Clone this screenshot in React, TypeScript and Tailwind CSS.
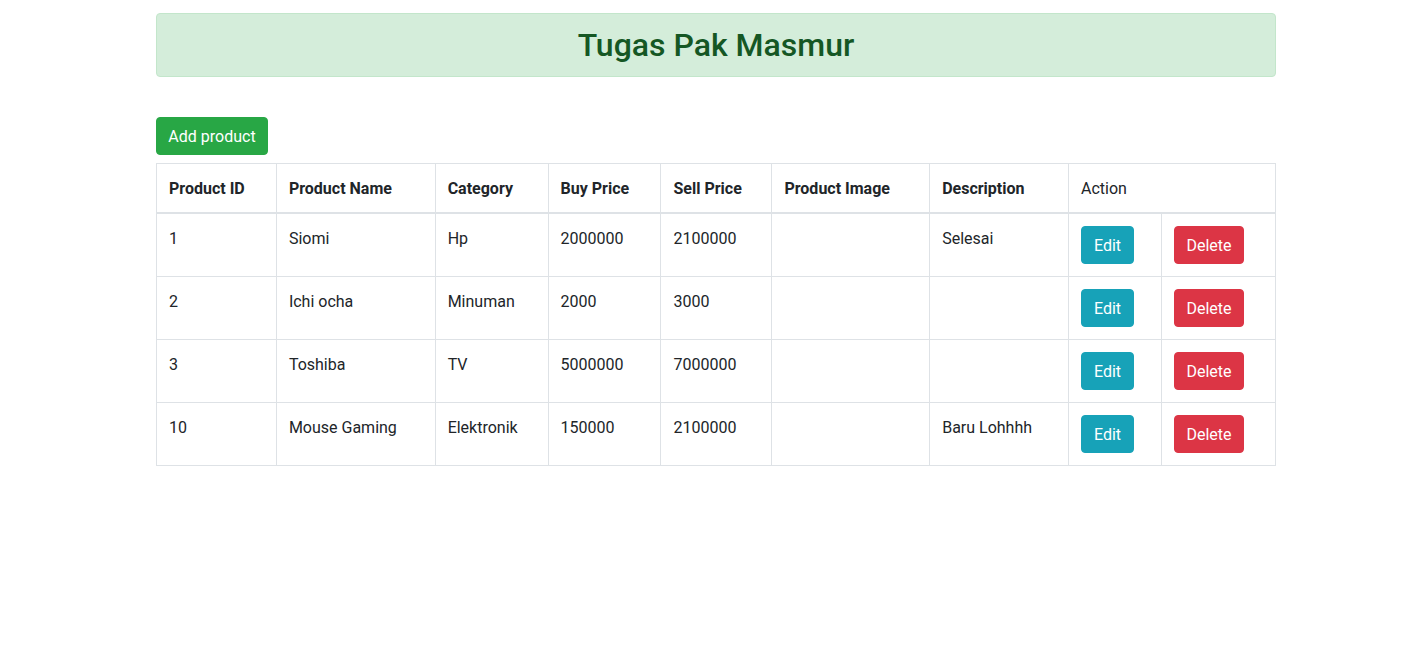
const products = [
  { id: 1, name: 'Siomi', category: 'Hp', buy: '2000000', sell: '2100000', image: '', description: 'Selesai' },
  { id: 2, name: 'Ichi ocha', category: 'Minuman', buy: '2000', sell: '3000', image: '', description: '' },
  { id: 3, name: 'Toshiba', category: 'TV', buy: '5000000', sell: '7000000', image: '', description: '' },
  { id: 10, name: 'Mouse Gaming', category: 'Elektronik', buy: '150000', sell: '2100000', image: '', description: 'Baru Lohhhh' },
];

const cell = 'border border-[#dee2e6] px-3 pt-[13px] pb-[11px] align-top text-left';
const btn = 'whitespace-nowrap rounded border pt-[7px] pb-[5px] leading-6 text-white';

export default function App() {
  return (
    <div className="min-h-screen bg-white text-[#212529] text-base leading-6" style={{ fontFamily: 'Roboto, "Noto Sans", sans-serif' }}>
      <div className="w-[1120px] ml-[156px] pt-[13px]">
        <div className="rounded border border-[#c3e6cb] bg-[#d4edda] px-5 py-3 text-center">
          <h2 className="text-[32px] font-medium leading-[1.2] text-[#155724]">Tugas Pak Masmur</h2>
        </div>

        <button type="button" className={`${btn} mt-[40px] mb-2 w-[112px] border-[#28a745] bg-[#28a745]`}>
          Add product
        </button>

        <table className="w-full border-collapse border border-[#dee2e6]">
          <colgroup>
            <col className="w-[120px]" />
            <col className="w-[159px]" />
            <col className="w-[113px]" />
            <col className="w-[113px]" />
            <col className="w-[111px]" />
            <col className="w-[158px]" />
            <col className="w-[139px]" />
            <col className="w-[93px]" />
            <col className="w-[114px]" />
          </colgroup>
          <thead>
            <tr>
              <th className={`${cell} border-b-2 font-bold`}>Product ID</th>
              <th className={`${cell} border-b-2 font-bold`}>Product Name</th>
              <th className={`${cell} border-b-2 font-bold`}>Category</th>
              <th className={`${cell} border-b-2 font-bold`}>Buy Price</th>
              <th className={`${cell} border-b-2 font-bold`}>Sell Price</th>
              <th className={`${cell} border-b-2 font-bold`}>Product Image</th>
              <th className={`${cell} border-b-2 font-bold`}>Description</th>
              <th colSpan={2} className={`${cell} border-b-2 font-normal`}>Action</th>
            </tr>
          </thead>
          <tbody>
            {products.map(product => (
              <tr key={product.id}>
                <td className={cell}>{product.id}</td>
                <td className={cell}>{product.name}</td>
                <td className={cell}>{product.category}</td>
                <td className={cell}>{product.buy}</td>
                <td className={cell}>{product.sell}</td>
                <td className={cell}>{product.image}</td>
                <td className={cell}>{product.description}</td>
                <td className="border border-[#dee2e6] p-3 align-top">
                  <button type="button" className={`${btn} w-[53px] border-[#17a2b8] bg-[#17a2b8]`}>
                    Edit
                  </button>
                </td>
                <td className="border border-[#dee2e6] p-3 align-top">
                  <button type="button" className={`${btn} w-[70px] border-[#dc3545] bg-[#dc3545]`}>
                    Delete
                  </button>
                </td>
              </tr>
            ))}
          </tbody>
        </table>
      </div>
    </div>
  );
}
